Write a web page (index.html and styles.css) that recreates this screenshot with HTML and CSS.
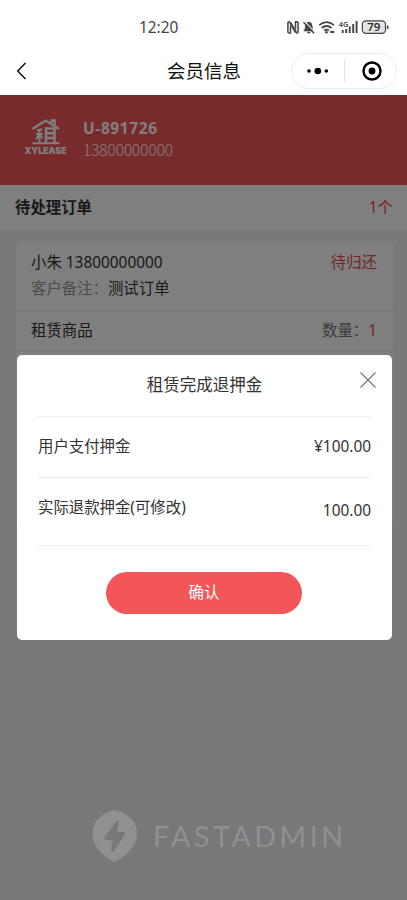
FILE: index.html
```html
<!DOCTYPE html>
<html lang="zh-CN">
<head>
<meta charset="utf-8">
<title>会员信息</title>
<link rel="stylesheet" href="styles.css">
</head>
<body>
<div class="phone">
  <header class="top">
    <div class="status">
      <span class="clock">12:20</span>
      <svg class="status-icons" width="104" height="20" viewBox="286 17 104 20" fill="none" stroke="#444" stroke-width="1.5">
        <path d="M290 21.800h-.8q-1.300 0-1.300 1.300v8.600q0 1.300 1.300 1.300h1.300v-7.500M296 33h.8q1.300 0 1.300-1.300v-8.600q0-1.300-1.300-1.300h-1.300v7.500" stroke-width="1.500"/>
        <path d="M290 22.200l6 10.400" stroke-width="2.300"/>
        <path d="M303.800 31q1.700-1.500 1.700-5.200 .4-3.700 3.300-3.700t3.300 3.700q0 3.700 1.700 5.200z" fill="#444" stroke="#444" stroke-width=".6"/>
        <path d="M307.300 32.500h3"/>
        <path d="M304.900 21.600l10 10.700" stroke="#fff" stroke-width="1.200"/>
        <path d="M303.500 22.200l10.600 11"/>
        <path d="M319.200 25.200q7.400-6 14.800 0M321.700 28q4.900-4 9.800 0M324.200 30.500q2.400-1.800 4.800 0" stroke-width="1.700"/>
        <circle cx="326.500" cy="32.200" r="1.300" fill="#444" stroke="none"/>
        <path d="M330.200 32h4" stroke-width="2"/>
        <text x="338.800" y="27" class="net">4G</text>
        <path d="M342.700 30v3M346.200 29v4M349.700 26.500v6.500M353.200 24v9M356.600 21v12" stroke-width="1.900"/>
        <rect x="362.300" y="20.800" width="23.200" height="12.600" rx="3.600" fill="#e4e4e4" stroke-width="1.200"/>
        <path d="M387.700 25.500v3.500"/>
        <text x="367.300" y="31.400" class="battery">79</text>
      </svg>
    </div>
    <div class="nav">
      <svg class="back" width="12" height="20" viewBox="0 0 12 20" fill="none" stroke="#111" stroke-width="1.500"><path d="M10.500 2L2.700 10l7.800 8"/></svg>
      <h1>会员信息</h1>
      <div class="capsule">
        <svg width="106" height="36" viewBox="0 0 106 36">
          <circle cx="18" cy="18" r="1.800"/><circle cx="26.800" cy="18" r="3.300"/><circle cx="35.300" cy="18" r="1.800"/>
          <path d="M53.500 7v22" stroke="#e2e2e2"/>
          <circle cx="81" cy="18" r="8.500" fill="none" stroke="#000" stroke-width="2.500"/><circle cx="81" cy="18" r="3.400"/>
        </svg>
      </div>
    </div>
  </header>
  <main class="page">
    <section class="member">
      <div class="logo">
        <svg width="30" height="27" viewBox="0 0 30 27" fill="none" stroke="#fff">
          <path d="M1.500 11L14.500 2.500 28 11M20.500 5V2.500h3.200V7" stroke-width="2.300"/>
          <path d="M1.500 25.300h27M5 16h7M8.500 11.500v12.500M11 11.200l-5 1.300M8.500 17l-3.500 4M8.500 17l3 3" stroke-width="2"/>
          <path d="M15 25V10.500h8.500V25M15 15.300h8.500M15 20h8.500" stroke-width="2.400"/>
        </svg>
        <span>XYLEASE</span>
      </div>
      <div>
        <div class="member-id">U-891726</div>
        <div class="member-phone">13800000000</div>
      </div>
    </section>
    <section class="pending"><strong>待处理订单</strong><span class="red">1个</span></section>
    <section class="order">
      <div class="customer">
        <div class="row"><span>小朱 13800000000</span><span class="red">待归还</span></div>
        <div class="row note"><span><span class="muted">客户备注：</span>测试订单</span></div>
      </div>
      <div class="row goods"><span>租赁商品</span><span><span class="soft">数量：</span><span class="red">1</span></span></div>
    </section>
    <div class="mask"></div>
    <footer class="brand">
      <svg width="46" height="54" viewBox="0 0 46 54">
        <path class="pin" d="M22.500 1C31 3 45 9 45 24.500 45 38 33 48 22.500 53 12 48 .5 38 .5 24.500.5 9 14 3 22.500 1z"/>
        <path class="bolt" d="M24 12.500Q27.500 10 27 14l-1.800 8.800h6.300q2.500.5 1 3L22 42q-3.200 2.500-3-1.500L20.200 31h-6.500q-2.500-.7-1-3z"/>
      </svg>
      <span>FASTADMIN</span>
    </footer>
    <section class="dialog">
      <h2>租赁完成退押金</h2>
      <svg class="close" width="18" height="18" viewBox="0 0 18 18" stroke="#777" stroke-width="1.300"><path d="M1.500 1.500l15 15M16.500 1.500l-15 15"/></svg>
      <div class="field"><span>用户支付押金</span><span>¥100.00</span></div>
      <div class="field refund"><span>实际退款押金(可修改)</span><span class="amount">100.00</span></div>
      <button>确认</button>
    </section>
  </main>
</div>
</body>
</html>
```
FILE: styles.css
```css
* { box-sizing: border-box; }
body { margin: 0; color: #333; font: 15.4px/22px "Noto Sans", "Noto Sans CJK SC", sans-serif; }
h1, h2 { margin: 0; font-weight: 400; }
.phone { height: 900px; display: flex; flex-direction: column; overflow: hidden; background: #fff; }
.top { height: 95px; flex: none; }
.status { height: 47px; padding: 17px 17px 0 139px; display: flex; justify-content: space-between; }
.clock { font-size: 15.400px; line-height: 22px; color: #444; }
.net { font: 600 7.500px "Noto Sans", sans-serif; fill: #444; stroke: none; }
.battery { font: 600 11.500px "Noto Sans", sans-serif; fill: #333; stroke: none; }
.nav { height: 48px; display: grid; grid-template-columns: 106px 1fr 106px; align-items: center; padding: 0 10px 0 15px; }
.nav h1 { font-size: 18.500px; color: #111; text-align: center; padding-right: 4px; }
.capsule { width: 106px; height: 36px; border: 1px solid #ececec; border-radius: 18px; }
.capsule svg { display: block; margin: -1px; }
.page { position: relative; height: 805px; display: flex; flex-direction: column; background: #eff1f4; }
.member { height: 90px; flex: none; background: #f25658; color: #fff; display: flex; gap: 15px; padding: 22px 24px 22px 23px; }
.logo { width: 45px; display: flex; flex-direction: column; align-items: center; margin-top: 1px; font: 900 8.800px/10px "Inter", sans-serif; }
.logo svg { flex: none; }
.logo span { margin-top: 1px; }
.member-id { font: 700 15.500px/22px "Noto Sans", sans-serif; letter-spacing: .6px; }
.member-phone { font: 300 15.300px/21px "Noto Sans CJK SC", sans-serif; }
.pending { height: 45px; flex: none; display: flex; justify-content: space-between; align-items: center; padding: 0 14px 0 15px; background: #fff; }
.red { color: #ee484d; }
.order { height: 287px; flex: none; margin: 11px 14px 0 16px; background: #fff; border-radius: 4px; }
.row { display: flex; justify-content: space-between; align-items: center; }
.customer { height: 70px; padding: 9px 16px 9px 15px; border-bottom: 1px solid #eee; }
.customer .row { height: 26px; }
.muted { color: #999; }
.soft { color: #777; }
.goods { height: 40px; padding: 1px 16px 0 15px; border-bottom: 1px solid #eee; }
.mask { position: absolute; inset: 0; background: rgba(0, 0, 0, .5); }
.brand { position: relative; margin: auto 0 37px 92px; display: flex; align-items: center; gap: 15px; color: #8f9092; font: 400 28.500px/54px "Lato", sans-serif; letter-spacing: 3.600px; }
.pin { fill: #8f9092; }
.bolt { fill: #777879; }
.dialog { position: absolute; left: 17px; top: 260px; width: 375px; height: 285px; padding: 0 21px; background: #fff; border-radius: 5px; display: flex; flex-direction: column; }
.dialog h2 { font-size: 16.500px; line-height: 22px; height: 62px; padding-top: 19px; text-align: center; border-bottom: 1px solid #eee; }
.close { position: absolute; right: 15px; top: 16px; }
.field { height: 61px; flex: none; display: flex; justify-content: space-between; padding-top: 19px; border-bottom: 1px solid #eee; }
.refund { height: 68px; }
.amount { padding-top: 3px; }
button { align-self: center; width: 196px; height: 42px; margin: 26px 1px 0 0; padding: 0; border: 0; border-radius: 21px; background: #f25658; color: #fff; font: inherit; }
```
